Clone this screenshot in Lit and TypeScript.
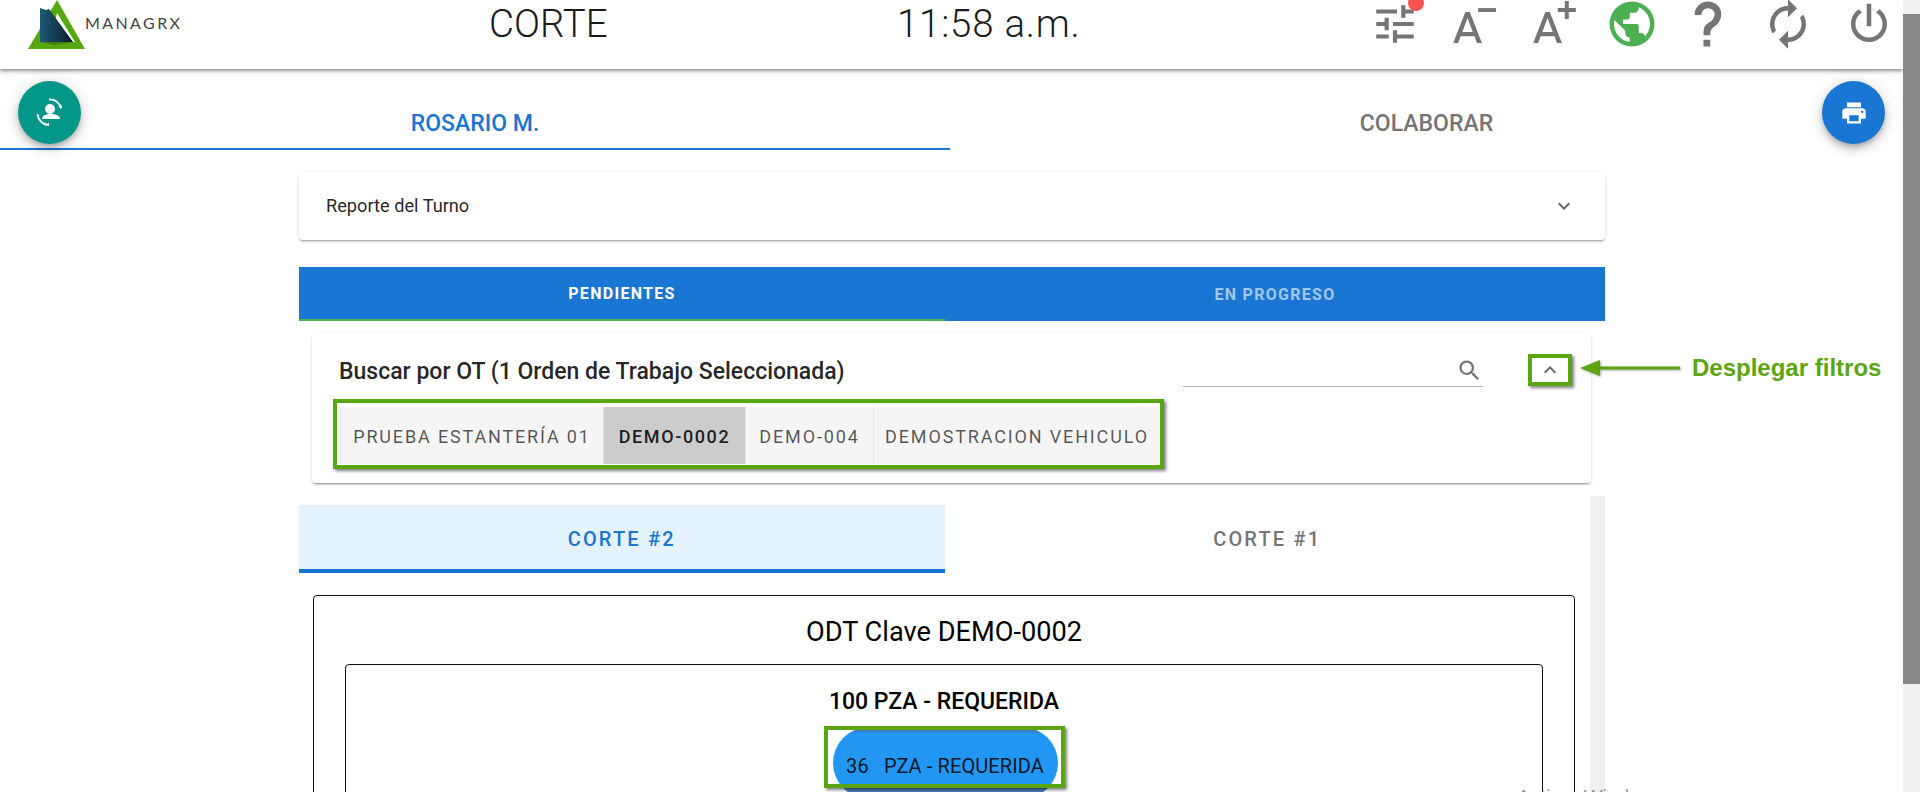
import { LitElement, html, css, svg } from "lit";
import { customElement } from "lit/decorators.js";

const P = {
  tune: "M3,17V19H9V17H3M3,5V7H13V5H3M13,21V19H21V17H13V15H11V21H13M7,9V11H3V13H7V15H9V9H7M21,13V11H11V13H21M15,9H17V7H21V5H17V3H15V9Z",
  fontA: "M5.12,14L7.5,7.67L9.87,14H5.12M6.5,5L1,19H3.25L4.37,16H10.62L11.75,19H14L8.5,5H6.5Z",
  minus: "M12.3,3.2H20.4V5H12.3Z",
  plus: "M15.3,0H17.1V3.2H20.3V5H17.1V8.2H15.3V5H12.1V3.2H15.3Z",
  earth: "M17.9,17.39C17.64,16.59 16.89,16 16,16H15V13A1,1 0 0,0 14,12H8V10H10A1,1 0 0,0 11,9V7H13A2,2 0 0,0 15,5V4.59C17.93,5.77 20,8.64 20,12C20,14.08 19.2,15.97 17.9,17.39M11,19.93C7.05,19.44 4,16.08 4,12C4,11.38 4.08,10.78 4.22,10.19L9,15V16A2,2 0 0,0 11,18M12,2A10,10 0 0,0 2,12A10,10 0 0,0 12,22A10,10 0 0,0 22,12A10,10 0 0,0 12,2Z",
  help: "M10,19H13V22H10V19M12,2C17.35,2.22 19.68,7.62 16.5,11.67C15.67,12.67 14.33,13.33 13.67,14.17C13,15 13,16 13,17H10C10,15.33 10,13.92 10.67,12.92C11.33,11.92 12.67,11.33 13.5,10.67C15.92,8.43 15.32,5.26 12,5A3,3 0 0,0 9,8H6A6,6 0 0,1 12,2Z",
  sync: "M12,18A6,6 0 0,1 6,12C6,11 6.25,10.03 6.7,9.2L5.24,7.74C4.46,8.97 4,10.43 4,12A8,8 0 0,0 12,20V23L16,19L12,15M12,4V1L8,5L12,9V6A6,6 0 0,1 18,12C18,13 17.75,13.97 17.3,14.8L18.76,16.26C19.54,15.03 20,13.57 20,12A8,8 0 0,0 12,4Z",
  power: "M16.56,5.44L15.11,6.89C16.84,7.94 18,9.83 18,12A6,6 0 0,1 12,18A6,6 0 0,1 6,12C6,9.83 7.16,7.94 8.88,6.88L7.44,5.44C5.36,6.88 4,9.28 4,12A8,8 0 0,0 12,20A8,8 0 0,0 20,12C20,9.28 18.64,6.88 16.56,5.44M13,3H11V13H13",
  printer: "M18,3H6V7H18M19,12A1,1 0 0,1 18,11A1,1 0 0,1 19,10A1,1 0 0,1 20,11A1,1 0 0,1 19,12M16,19H8V14H16M19,8H5A3,3 0 0,0 2,11V17H6V21H18V17H22V11A3,3 0 0,0 19,8Z",
  down: "M7.41,8.58L12,13.17L16.59,8.58L18,10L12,16L6,10L7.41,8.58Z",
  up: "M7.41,15.41L12,10.83L16.59,15.41L18,14L12,8L6,14L7.41,15.41Z",
  magnify: "M9.5,3A6.5,6.5 0 0,1 16,9.5C16,11.11 15.41,12.59 14.44,13.73L14.71,14H15.5L20.5,19L19,20.5L14,15.5V14.71L13.73,14.44C12.59,15.41 11.11,16 9.5,16A6.5,6.5 0 0,1 3,9.5A6.5,6.5 0 0,1 9.5,3M9.5,5C7,5 5,7 5,9.5C5,12 7,14 9.5,14C12,14 14,12 14,9.5C14,7 12,5 9.5,5Z",
};

const icon = (d: string | string[], cls = "") => html`<svg class=${cls} viewBox="0 0 24 24" fill="currentColor">${(Array.isArray(d) ? d : [d]).map((p) => svg`<path d=${p}></path>`)}</svg>`;

@customElement("app-root")
export class AppRoot extends LitElement {
  static styles = css`
    :host { display: block; position: relative; height: 792px; overflow: hidden; background: #fff; font-family: Roboto, sans-serif; color: rgba(0,0,0,.87); }
    * { box-sizing: border-box; }
    .page { display: flex; height: 792px; }
    .main { width: 1903px; height: 792px; overflow: hidden; position: relative; }
    .pagebar { width: 17px; background: #f1f1f1; padding-top: 14px; }
    .pagebar div { height: 670px; background: #888; }

    header { position: relative; z-index: 3; height: 69px; background: #fff; box-shadow: 0 2px 4px rgba(0,0,0,.45); display: flex; align-items: flex-start; overflow: hidden; }
    .logo { display: flex; width: 181px; margin-left: 28px; flex: none; }
    .logo svg { width: 58px; height: 50px; flex: none; }
    .logo span { font-family: Lato, sans-serif; font-size: 16px; letter-spacing: 2.4px; color: #444; margin-top: 13px; margin-left: -1px; }
    .title { font-size: 38.4px; line-height: 48px; margin-left: 280px; width: 408px; flex: none; }
    .time { font-size: 38.4px; line-height: 48px; letter-spacing: .8px; flex: none; width: 473px; }
    .time, .title { font-weight: 300; color: #1c1c1c; }
    .icons { display: flex; align-items: flex-start; color: #757575; margin-top: -3px; }
    .icons svg { flex: none; width: 54px; height: 54px; }
    .icons .tune-wrap { position: relative; width: 50px; height: 50px; margin-top: 2px; flex: none; }
    .icons .tune-wrap svg { width: 50px; height: 50px; display: block; }
    .dot { position: absolute; left: 38px; top: -4px; width: 16px; height: 16px; border-radius: 50%; background: #ff5252; }
    .ia { margin-left: 31px; } .ib { margin-left: 27px; } .ic { margin-left: 21px; } .id { margin-left: 22px; } .ie { margin-left: 26px; } .if { margin-left: 27px; }
    .icons .fa { width: 53px; height: 53px; margin-top: 4px; }
    .earth { color: #4caf50; }

    .fab { position: absolute; top: 81px; width: 63px; height: 63px; border-radius: 50%; display: flex; align-items: center; justify-content: center; color: #fff; z-index: 2;
      box-shadow: 0 3px 5px -1px rgba(0,0,0,.2), 0 6px 10px rgba(0,0,0,.14), 0 1px 18px rgba(0,0,0,.12); }
    .fab.teal { left: 18px; background: #009688; }
    .fab.blue { left: 1822px; background: #1976d2; }
    .fab.blue svg { width: 28px; height: 28px; }
    .fab.teal svg { width: 40px; height: 40px; }

    .toptabs { display: flex; height: 81px; }
    .toptab { flex: none; display: flex; align-items: flex-end; justify-content: center; padding-bottom: 10px; font-size: 23px; font-weight: 500; color: #757575; line-height: 28px; }
    .toptab.l { width: 950px; color: #1976d2; border-bottom: 2px solid #1976d2; }
    .toptab.r { width: 953px; padding-bottom: 12px; }

    .col { width: 1306px; margin-left: 299px; padding-top: 22px; }
    .acc { height: 68px; border-radius: 4px; box-shadow: 0 2px 2px -1px rgba(0,0,0,.35), 0 1px 4px rgba(0,0,0,.14); display: flex; align-items: center; justify-content: space-between; padding: 0 29px 2px 27px; font-size: 18.2px; }
    .acc svg { width: 24px; height: 24px; color: #666; margin-top: 2px; }

    .tabbar { margin-top: 27px; height: 54px; background: #1976d2; display: flex; }
    .tabbar div { width: 646px; display: flex; align-items: center; justify-content: center; font-size: 16px; font-weight: 700; letter-spacing: 1.3px; color: rgba(255,255,255,.6); padding-top: 1px; }
    .tabbar div.on { color: #fff; border-bottom: 2px solid #4caf50; }
    .tabbar div.off { width: 660px; }

    .search { position: relative; margin: 13px 14px 0 13px; height: 149px; width: 1279px; border-radius: 4px; background: #fff; box-shadow: 0 2px 2px -1px rgba(0,0,0,.4), 0 1px 4px rgba(0,0,0,.12); padding: 20px 0 0 21px; }
    .shead { display: flex; align-items: flex-start; height: 45px; }
    .stitle { font-size: 23px; font-weight: 500; line-height: 36px; width: 844px; flex: none; margin-left: 6px; }
    .sfield { width: 300px; height: 33px; border-bottom: 1px solid #b4b4b4; display: flex; justify-content: flex-end; color: #757575; flex: none; }
    .sfield svg { width: 27px; height: 27px; margin-top: 3px; }
    .upbox { margin-left: 45px; width: 44px; height: 32px; border: 4px solid #5aa612; box-shadow: 2px 2px 3px rgba(0,0,0,.5); color: #666; display: flex; align-items: center; justify-content: center; flex: none; }
    .upbox svg { width: 24px; height: 24px; }
    .note { position: absolute; left: 1268px; top: 22px; display: flex; align-items: center; height: 24px; }
    .note svg { width: 100px; height: 20px; flex: none; filter: drop-shadow(1px 1px 1px rgba(0,0,0,.35)); }
    .note span { font-family: "Liberation Sans", sans-serif; font-size: 24px; font-weight: 700; color: #5aa612; margin-left: 12px; white-space: nowrap; }

    .chips { display: inline-flex; border: 4px solid #5aa612; padding: 4px 0 1px 3px; height: 70px; width: 831px; box-shadow: 2px 2px 3px rgba(0,0,0,.5); }
    .chip { height: 57px; display: flex; align-items: center; justify-content: center; background: #f5f5f5; font-size: 18px; font-weight: 400; letter-spacing: 1.85px; color: rgba(0,0,0,.66); border-left: 1px solid #e6e6e6; flex: none; padding-top: 2px; }
    .chip.on { background: #ccc; color: rgba(0,0,0,.87); font-weight: 500; letter-spacing: 1.6px; }

    .lower { display: flex; margin-top: 13px; }
    .lmain { width: 1291px; padding-top: 9px; }
    .ltrack { width: 15px; height: 300px; background: #f0f0f0; }
    .ctabs { display: flex; height: 68px; }
    .ctab { width: 646px; display: flex; align-items: center; justify-content: center; font-size: 20px; font-weight: 500; letter-spacing: 2.2px; color: #757575; padding-bottom: 1px; }
    .ctab.on { background: #e3f2fd; color: #1976d2; border-bottom: 4px solid #1976d2; padding-top: 4px; padding-bottom: 0; }
    .card { margin: 22px 15px 0 14px; height: 400px; border: 1px solid #111; border-radius: 4px; padding: 0 31px; }
    .card h2 { margin: 0; font-size: 27.2px; font-weight: 400; line-height: 32px; text-align: center; padding-top: 20px; height: 68px; color: #000; }
    .inner { height: 300px; border: 1px solid #111; border-radius: 4px; display: flex; flex-direction: column; align-items: center; }
    .inner h3 { margin: 0; font-size: 23px; font-weight: 500; line-height: 28px; padding-top: 23px; color: #000; height: 61px; }
    .pillbox { position: relative; width: 241px; height: 62px; }
    .pill { position: absolute; left: 9px; top: 1px; width: 225px; height: 72px; border-radius: 36px; background: linear-gradient(#4f72b4 0, #4f72b4 3px, #2196f3 6px, #2196f3 61px, #4f7fc0 61px); display: flex; align-items: flex-start; justify-content: center; padding-top: 27px; font-size: 20px; line-height: 24px; letter-spacing: .1px; color: rgba(0,0,0,.87); white-space: pre; }
    .pillframe { position: absolute; inset: 0; border: 4px solid #5aa612; box-shadow: 2px 2px 3px rgba(0,0,0,.5); }
    .mark { position: absolute; left: 1517px; top: 785px; font-family: "Liberation Sans", sans-serif; font-size: 20px; line-height: 24px; color: rgba(120,120,120,.8); z-index: 5; white-space: nowrap; }
  `;

  render() {
    const chips: [string, number, boolean][] = [["PRUEBA ESTANTERÍA 01", 263, false], ["DEMO-0002", 142, true], ["DEMO-004", 128, false], ["DEMOSTRACION VEHICULO", 287, false]];
    return html`
      <div class="page">
        <div class="main">
          <header>
            <div class="logo">
              <svg viewBox="0 0 58 50">
                <defs><linearGradient id="lg" x1="0" x2="1" y1="0" y2="0"><stop offset="0" stop-color="#1f5b78"></stop><stop offset="1" stop-color="#081a26"></stop></linearGradient></defs>
                <path d="M29 0 L57 49 H0 Z" fill="#56a80f"></path>
                <path d="M29 13 L47 42 H22 Z" fill="#fff"></path>
                <path d="M12 8 L18 10 L21 9 L45 42 H12 Z" fill="url(#lg)"></path>
                <path d="M12 42 H45 L26 45 Z" fill="#3f7f0c"></path>
              </svg>
              <span>MANAGRX</span>
            </div>
            <div class="title">CORTE</div>
            <div class="time">11:58 a.m.</div>
            <div class="icons">
              <div class="tune-wrap">${icon(P.tune)}<span class="dot"></span></div>
              ${icon([P.fontA, P.minus], "fa ia")}
              ${icon([P.fontA, P.plus], "fa ib")}
              ${icon(P.earth, "earth ic")}
              ${icon(P.help, "id")}
              <svg class="ie" viewBox="0 0 24 24" fill="currentColor"><g transform="matrix(-1 0 0 1 24 0)"><path d=${P.sync}></path></g></svg>
              ${icon(P.power, "if")}
            </div>
          </header>
          <div class="fab teal">
            <svg viewBox="0 0 40 40" fill="none">
              <circle cx="20" cy="16" r="5" fill="#fff"></circle>
              <path d="M11 27c0-3.5 4-5 9-5s9 1.500 9 5z" fill="#fff" transform="translate(1 -1)"></path>
              <path d="M19 6.500c5.500-.5 10.500 3 12 8.500" stroke="#fff" stroke-width="1.800"></path>
              <path d="M7.500 21c.5 6 5.500 11 11.500 11" stroke="#fff" stroke-width="1.800"></path>
              <path d="M31 16l-2.500-3 3.800-.6z M19 33l-3-1.500 3-2z" fill="#fff"></path>
            </svg>
          </div>
          <div class="fab blue">${icon(P.printer)}</div>
          <div class="toptabs">
            <div class="toptab l">ROSARIO M.</div>
            <div class="toptab r">COLABORAR</div>
          </div>
          <div class="col">
            <div class="acc"><span>Reporte del Turno</span>${icon(P.down)}</div>
            <div class="tabbar"><div class="on">PENDIENTES</div><div class="off">EN PROGRESO</div></div>
            <div class="search">
              <div class="shead">
                <div class="stitle">Buscar por OT (1 Orden de Trabajo Seleccionada)</div>
                <div class="sfield">${icon(P.magnify)}</div>
                <div class="upbox">${icon(P.up)}</div>
              </div>
              <div class="chips">
                ${chips.map(([t, w, on]) => html`<div class="chip ${on ? "on" : ""}" style="width:${w}px">${t}</div>`)}
              </div>
              <div class="note">
                <svg viewBox="0 0 100 20"><path d="M0 10 L20 2 V8.500 H100 V11.500 H20 V18 Z" fill="#5aa612"></path></svg>
                <span>Desplegar filtros</span>
              </div>
            </div>
            <div class="lower">
              <div class="lmain">
                <div class="ctabs"><div class="ctab on">CORTE #2</div><div class="ctab">CORTE #1</div></div>
                <div class="card">
                  <h2>ODT Clave DEMO-0002</h2>
                  <div class="inner">
                    <h3>100 PZA - REQUERIDA</h3>
                    <div class="pillbox">
                      <div class="pill">36   PZA - REQUERIDA</div>
                      <div class="pillframe"></div>
                    </div>
                  </div>
                </div>
              </div>
              <div class="ltrack"></div>
            </div>
          </div>
        </div>
        <div class="pagebar"><div></div></div>
      </div>
      <div class="mark">Activar Windows</div>
    `;
  }
}
